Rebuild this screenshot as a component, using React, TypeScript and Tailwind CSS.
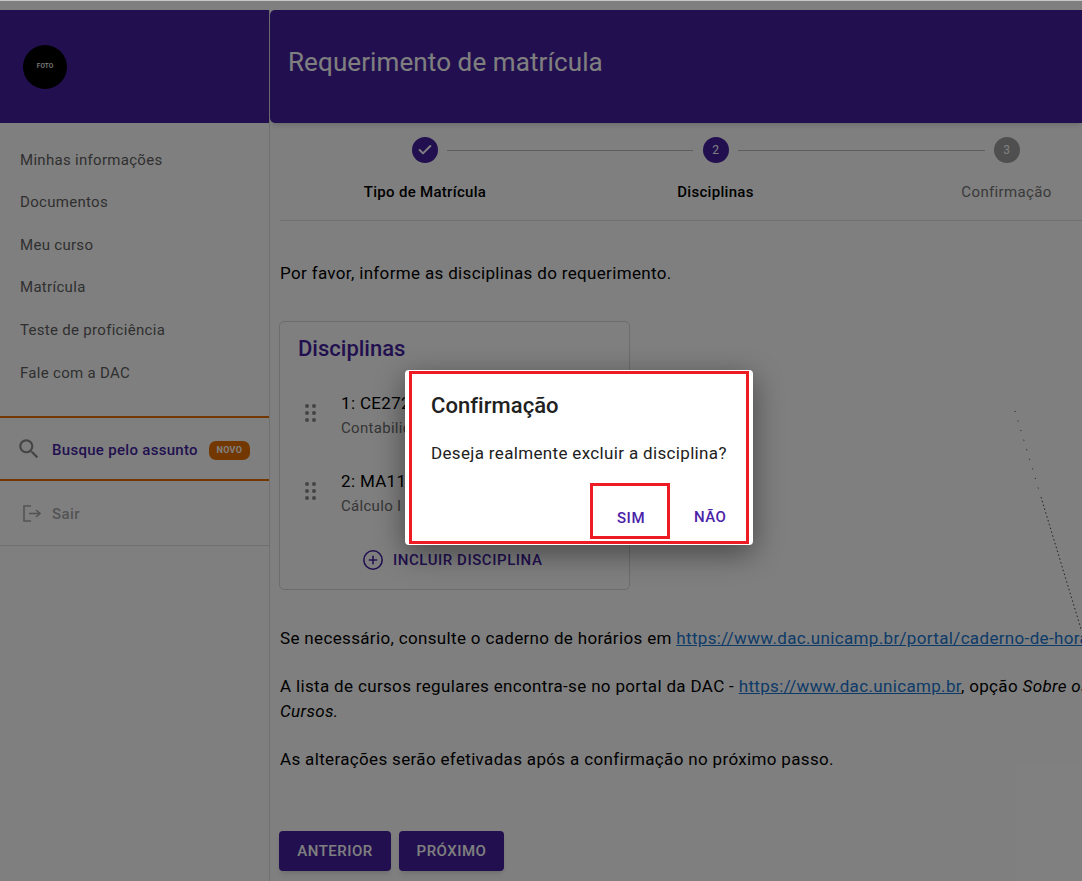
import { Check, CirclePlus } from "lucide-react"

const menuItems = [
  "Minhas informações",
  "Documentos",
  "Meu curso",
  "Matrícula",
  "Teste de proficiência",
  "Fale com a DAC",
]

function DragHandle() {
  return (
    <svg width="11" height="18" viewBox="0 0 11 18" className="fill-[#8a8a8a] shrink-0">
      <circle cx="2" cy="2" r="2" />
      <circle cx="9" cy="2" r="2" />
      <circle cx="2" cy="9" r="2" />
      <circle cx="9" cy="9" r="2" />
      <circle cx="2" cy="16" r="2" />
      <circle cx="9" cy="16" r="2" />
    </svg>
  )
}

function Sidebar() {
  return (
    <aside className="w-[270px] shrink-0 border-r border-[#e0e0e0] bg-white">
      <div className="h-[113px] bg-[#441f9f] flex items-center pl-[23px]">
        <div className="w-[44px] h-[44px] rounded-full bg-black flex items-center justify-center pt-px text-[6.5px] font-medium text-white">
          FOTO
        </div>
      </div>
      <nav className="pt-[15.5px] pb-[22px] flex flex-col">
        {menuItems.map((item) => (
          <div key={item} className="h-[42.6px] pl-5 flex items-center text-[15px] tracking-[0.3px] text-[#5f5f5f]">
            {item}
          </div>
        ))}
      </nav>
      <div className="h-[65px] border-y-2 border-[#e76f00] pl-[16px] flex items-center">
        <svg width="26" height="26" viewBox="0 0 24 24" className="fill-[#8c8c8c] shrink-0">
          <path d="M15.5 14h-.79l-.28-.27C15.41 12.59 16 11.11 16 9.5 16 5.91 13.09 3 9.5 3S3 5.91 3 9.5 5.91 16 9.5 16c1.61 0 3.09-.59 4.23-1.57l.27.28v.79l5 4.99L20.49 19l-4.99-5zm-6 0C7.01 14 5 11.99 5 9.5S7.01 5 9.5 5 14 7.01 14 9.5 11.99 14 9.5 14z" />
        </svg>
        <span className="ml-[10px] mt-[3px] text-[15px] font-medium tracking-[0.3px] text-[#441f9f] whitespace-nowrap">Busque pelo assunto</span>
        <span className="ml-[11px] mt-[4px] h-[19px] w-[41px] rounded-[7px] bg-[#e76f00] text-white text-[9px] font-bold tracking-[0.3px] flex items-center justify-center">
          NOVO
        </span>
      </div>
      <div className="h-[65px] border-b border-[#e0e0e0] pl-[23px] flex items-center">
        <svg width="18" height="17" viewBox="0 0 18 17" fill="none" className="stroke-[#a8a8a8] shrink-0" strokeWidth="1.6">
          <path d="M8 1H1v15h7" />
          <path d="M6 8.5h11" />
          <path d="M13 5l4 3.5-4 3.5" />
        </svg>
        <span className="ml-[11px] mt-[2px] text-[15px] font-medium tracking-[0.4px] text-[#a8a8a8]">Sair</span>
      </div>
    </aside>
  )
}

function Stepper() {
  return (
    <div className="h-[98px] border-b border-[#e0e0e0] flex">
      <div className="w-[290px] flex flex-col items-center pt-[14px] relative">
        <div className="flex items-center justify-center w-[26px] h-[26px] rounded-full bg-[#441f9f] text-white">
          <Check size={16} strokeWidth={3} />
        </div>
        <span className="mt-[21px] text-[15px] font-medium leading-[17px] tracking-[0.3px] text-black">Tipo de Matrícula</span>
      </div>
      <div className="w-[291px] flex flex-col items-center pt-[14px] relative">
        <div className="absolute left-[-123px] top-[27px] w-[246px] h-px bg-[#bdbdbd]" />
        <div className="flex items-center justify-center w-[26px] h-[26px] rounded-full bg-[#441f9f] text-white text-[12px]">
          2
        </div>
        <span className="mt-[21px] text-[15px] font-medium leading-[17px] tracking-[0.3px] text-black">Disciplinas</span>
      </div>
      <div className="w-[291px] flex flex-col items-center pt-[14px] relative">
        <div className="absolute left-[-123px] top-[27px] w-[247px] h-px bg-[#bdbdbd]" />
        <div className="flex items-center justify-center w-[26px] h-[26px] rounded-full bg-[#9e9e9e] text-white text-[12px]">
          3
        </div>
        <span className="mt-[21px] text-[15px] leading-[17px] tracking-[0.35px] text-[#757575]">Confirmação</span>
      </div>
    </div>
  )
}

function DisciplinaRow({ title, subtitle }: { title: string; subtitle: string }) {
  return (
    <div className="h-[78px] flex pl-[25px] pt-[12px]">
      <div className="pt-[13px]">
        <DragHandle />
      </div>
      <div className="ml-[25px]">
        <div className="text-[17px] leading-[24px] tracking-[0.33px] text-black whitespace-nowrap">{title}</div>
        <div className="text-[15px] leading-[26px] tracking-[0.3px] text-[#6b6b6b] whitespace-nowrap">{subtitle}</div>
      </div>
    </div>
  )
}

function Content() {
  return (
    <main className="flex-1 min-w-0 relative">
      <div className="h-[113px] bg-[#441f9f] rounded-l-[5px] shadow-md flex items-center pl-[18px] pb-[9px]">
        <h1 className="text-[26px] tracking-[0.1px] text-white whitespace-nowrap">Requerimento de matrícula</h1>
      </div>
      <div className="pl-[10px] w-[890px]">
        <Stepper />
        <p className="mt-[40px] text-[17px] leading-[24px] tracking-[0.34px] text-black">
          Por favor, informe as disciplinas do requerimento.
        </p>
        <section className="mt-[36px] -ml-px w-[351px] h-[269px] rounded-[5px] border border-[#d9d9d9] bg-white">
          <h2 className="pl-[18px] pt-[13px] text-[22px] leading-[28px] font-medium text-[#441f9f]">Disciplinas</h2>
          <div className="mt-[16px]">
            <DisciplinaRow title="1: CE272" subtitle="Contabilidade" />
            <DisciplinaRow title="2: MA111" subtitle="Cálculo I" />
          </div>
          <div className="mt-[14px] pl-[82px] flex items-center text-[#441f9f]">
            <CirclePlus size={22} strokeWidth={1.7} />
            <span className="ml-[9px] text-[15px] font-medium tracking-[0.55px]">INCLUIR DISCIPLINA</span>
          </div>
        </section>
        <p className="mt-[36px] text-[17px] leading-[24px] tracking-[0.34px] text-black whitespace-nowrap">
          Se necessário, consulte o caderno de horários em{" "}
          <a className="text-[#1976d2] underline">https://www.dac.unicamp.br/portal/caderno-de-horarios</a>
        </p>
        <p className="mt-[24px] text-[17px] leading-[25px] tracking-[0.34px] text-black whitespace-nowrap">
          A lista de cursos regulares encontra-se no portal da DAC -{" "}
          <a className="text-[#1976d2] underline">https://www.dac.unicamp.br</a>, opção <em>Sobre os</em>
          <br />
          <em>Cursos.</em>
        </p>
        <p className="mt-[23px] text-[17px] leading-[24px] tracking-[0.34px] text-black">
          As alterações serão efetivadas após a confirmação no próximo passo.
        </p>
        <div className="mt-[60px] -ml-px flex gap-[8px]">
          <button className="h-[40px] w-[112px] rounded-[4px] bg-[#441f9f] text-white text-[15px] font-medium tracking-[0.5px] shadow-md">
            ANTERIOR
          </button>
          <button className="h-[40px] w-[105px] rounded-[4px] bg-[#441f9f] text-white text-[15px] font-medium tracking-[0.5px] shadow-md">
            PRÓXIMO
          </button>
        </div>
      </div>
    </main>
  )
}

export default function App() {
  return (
    <div className="relative w-[1082px] h-[881px] overflow-hidden bg-white pt-[10px] font-['Roboto',sans-serif]">
      <div className="flex h-[871px]">
        <Sidebar />
        <Content />
      </div>

      {/* Modal backdrop */}
      <div className="absolute inset-0 bg-black/50" />
      <div className="absolute left-0 top-0 w-full h-px bg-[#c8c8c8]" />

      {/* Stray dotted line over the backdrop */}
      <svg className="absolute left-[1010px] top-[405px]" width="72" height="230" viewBox="0 0 72 230">
        <line x1="5" y1="6" x2="31" y2="92" stroke="#222" strokeWidth="1" strokeDasharray="1 9" />
        <line x1="31" y1="92" x2="71" y2="224" stroke="#222" strokeWidth="1" strokeDasharray="1.5 2.5" />
      </svg>

      {/* Dialog */}
      <div className="absolute left-[405px] top-[370px] w-[348px] h-[175px] rounded-[4px] bg-white px-[4px] py-[1px] shadow-[0_8px_30px_rgba(0,0,0,0.45)]">
        <div className="relative h-full border-[3px] border-[#ed1c24]">
          <h3 className="pl-[19px] pt-[18px] text-[22px] leading-[28px] font-medium tracking-[0.05px] text-[#212121]">Confirmação</h3>
          <p className="pl-[19px] mt-[21px] text-[17px] leading-[24px] tracking-[0.34px] text-[#212121] whitespace-nowrap">
            Deseja realmente excluir a disciplina?
          </p>
          <div className="absolute left-[178px] top-[109px] w-[80px] h-[56px] border-[3px] border-[#ed1c24] flex items-center justify-center pt-[14px] pl-[2px] text-[15px] font-medium tracking-[0.6px] text-[#4a22a8]">
            SIM
          </div>
          <div className="absolute left-[282px] top-[134px] text-[15px] leading-[18px] font-medium tracking-[0.4px] text-[#4a22a8]">
            NÃO
          </div>
        </div>
      </div>
    </div>
  )
}
